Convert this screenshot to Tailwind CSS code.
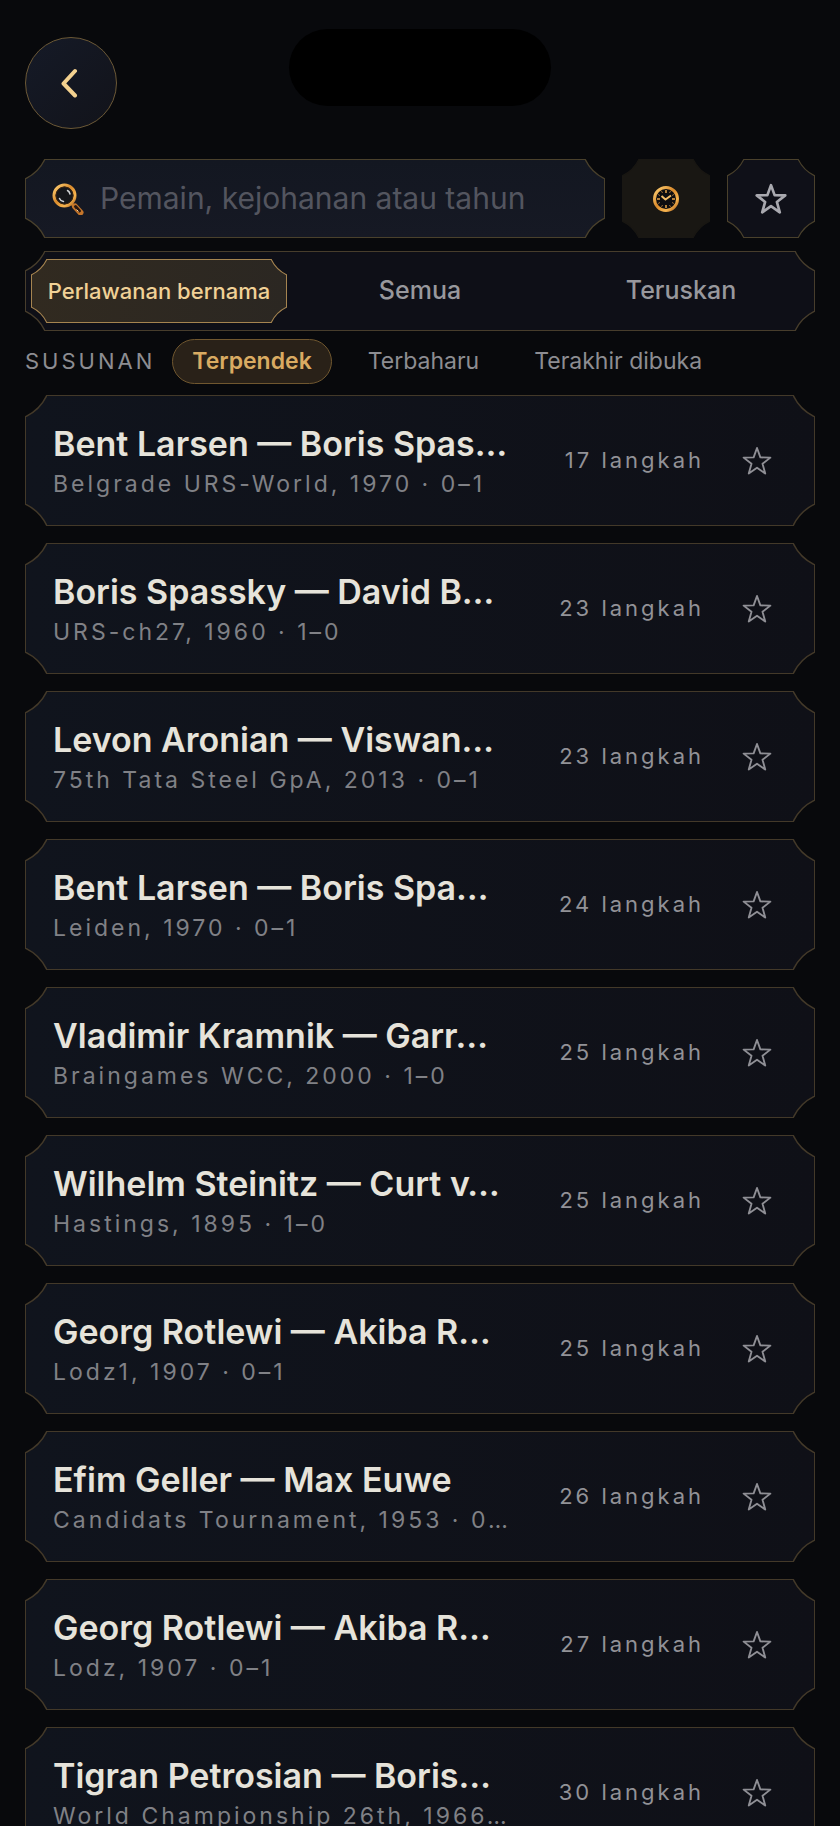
<!DOCTYPE html>
<html lang="ms">
<head>
<meta charset="utf-8">
<meta name="viewport" content="width=device-width, initial-scale=1">
<title>Perlawanan</title>
<script src="https://cdn.jsdelivr.net/npm/@tailwindcss/browser@4"></script>
</head>
<body class="relative flex h-screen flex-col overflow-hidden bg-[#08090c] font-['Inter','Liberation_Sans',sans-serif] text-[#9a9a9f]">

<svg class="absolute size-0" aria-hidden="true">
  <symbol id="star" viewBox="0 0 24 24">
    <path d="M12 1.6 14.7 9.1 22.7 9.3 16.4 14.2 18.6 22 12 17.4 5.4 22 7.6 14.2 1.3 9.3 9.3 9.1Z" fill="none" stroke="currentColor" stroke-linejoin="round"/>
  </symbol>
  <linearGradient id="gold" x1="0" y1="0" x2="1" y2="1">
    <stop offset="0" stop-color="#ffd277"/><stop offset=".45" stop-color="#d98a2b"/><stop offset=".75" stop-color="#f7b550"/><stop offset="1" stop-color="#a85c17"/>
  </linearGradient>
</svg>

<header class="flex items-start justify-between px-[25px] pt-[37px]">
  <button type="button" aria-label="Kembali" class="flex size-[92px] items-center justify-center rounded-full border border-[#6b5836] bg-linear-to-br from-[#151a27] to-[#12131a] text-[#f3d18f]">
    <svg class="h-8 w-5" viewBox="0 0 20 32" fill="none" stroke="currentColor" stroke-width="4" stroke-linecap="round" stroke-linejoin="round"><path d="M14 4 2.500 16.500 14 28.500"/></svg>
  </button>
</header>
<div class="absolute left-1/2 top-[29px] h-[77px] w-[262px] -translate-x-1/2 rounded-full bg-black"></div>

<main class="flex min-h-0 flex-1 flex-col px-[25px] pt-[30px]">
  <div class="flex gap-[17px]">
    <label data-frame="20" class="relative flex h-[79px] flex-1 items-center gap-4 border border-[#4a412c] bg-linear-to-b from-[#131721] to-[#161924] pl-[26px] text-[#4a412c]">
      <svg class="size-8 shrink-0" viewBox="0 0 32 32" aria-hidden="true">
        <path d="M19.500 20.500 23 24" stroke="#c8812f" stroke-width="3"/>
        <path d="M23 23.500 28.500 29.500" stroke="#c4752a" stroke-width="6" stroke-linecap="round"/>
        <path d="M23.500 23.500 27.500 28" stroke="#2a1710" stroke-width="3" stroke-linecap="round"/>
        <path d="M24.500 26.500 26.500 28.500" stroke="#ffd9a0" stroke-width="1"/>
        <circle cx="12.500" cy="12.500" r="10.500" fill="#14161a" stroke="url(#gold)" stroke-width="3"/>
        <circle cx="12.500" cy="12.500" r="8.500" fill="none" stroke="#3a2412" stroke-width="1"/>
        <path d="M15.500 7.500q2 1 2.500 3.500M7.500 15.500q1 2.500 4 3" fill="none" stroke="#cfd2d4" stroke-width="1.500" stroke-linecap="round"/>
      </svg>
      <input type="search" aria-label="Cari" placeholder="Pemain, kejohanan atau tahun" class="w-full min-w-0 bg-transparent text-[30px] text-[#e4e1d8] outline-none placeholder:text-[#53555f]">
    </label>
    <button type="button" aria-label="Terkini" data-frame="17" class="relative flex h-[79px] w-[88px] items-center justify-center border border-[#191713] bg-[#191713] text-[#191713]">
      <svg class="size-7" viewBox="0 0 28 28" aria-hidden="true">
        <circle cx="14" cy="14" r="11.500" fill="#0d0d10" stroke="url(#gold)" stroke-width="3"/>
        <path d="M14 5v3M14 20v3M5 14h3M20 14h3" stroke="#e8a54a" stroke-width="1.500"/>
        <path d="M9.500 6.200l1 1.700M18.500 6.200l-1 1.700M6.200 9.500l1.700 1M21.800 9.500l-1.700 1M6.200 18.500l1.700-1M21.800 18.500l-1.700-1M9.500 21.800l1-1.700M18.500 21.800l-1-1.700" stroke="#a8763a" stroke-width="1"/>
        <path d="M9.500 11 13.500 14.500 19 10.500" fill="none" stroke="#f3bd68" stroke-width="2" stroke-linejoin="round"/>
      </svg>
    </button>
    <button type="button" aria-label="Kegemaran" data-frame="17" class="relative flex h-[79px] w-[88px] items-center justify-center border border-[#4a412c] bg-[#0f1018] text-[#4a412c]">
      <svg class="size-8 text-[#a9a9af]" stroke-width="2" aria-hidden="true"><use href="#star"/></svg>
    </button>
  </div>

  <div role="tablist" data-frame="20" class="relative mt-[13px] grid h-20 shrink-0 grid-cols-3 gap-[5px] border border-[#473d2c] bg-[#0e0f17] px-[5px] py-[7px] text-[25px] font-medium text-[#473d2c]">
    <button type="button" role="tab" aria-selected="true" data-frame="16" class="relative border border-[#a58450] bg-linear-to-r from-[#312a20] to-[#2b2722] fill-[#0e0f17] text-[#a58450]"><span class="whitespace-nowrap text-[22px] text-[#f0d196]">Perlawanan bernama</span></button>
    <button type="button" role="tab" aria-selected="false" class="text-[#98989d]">Semua</button>
    <button type="button" role="tab" aria-selected="false" class="text-[#98989d]">Teruskan</button>
  </div>

  <div class="mt-2 flex shrink-0 items-center gap-[17px] text-[23px] text-[#8d8d92]">
    <span class="text-[22px] tracking-[3px]">SUSUNAN</span>
    <button type="button" class="h-[45px] rounded-full border border-[#70572f] bg-[#292118] px-[19px] font-semibold text-[#d9ab62]">Terpendek</button>
    <button type="button" class="h-[45px] px-[19px]">Terbaharu</button>
    <button type="button" class="h-[45px] px-[19px]">Terakhir dibuka</button>
  </div>

  <ul id="games" class="mt-[11px] flex min-h-0 flex-1 flex-col gap-[17px] overflow-hidden"></ul>
</main>

<template id="row">
  <li data-frame="22" class="relative flex h-[131px] shrink-0 items-center border border-[#433929] bg-linear-to-r from-[#10141d] to-[#0f1017] pl-[27px] pr-[42px] text-[#433929]">
    <a href="#" class="min-w-0 flex-1 pt-1 whitespace-nowrap">
      <span data-title class="block text-[34px] leading-[42px] font-semibold text-[#e6e3da]"></span>
      <span data-event class="block text-[23px] leading-[38px] tracking-[3px] text-[#808186]"></span>
    </a>
    <span data-moves class="mr-[38px] text-[22px] tracking-[3px] text-[#929297]"></span>
    <button type="button" aria-label="Tambah ke kegemaran" class="text-[#8f8f95]"><svg class="size-[30px]" stroke-width="1.500" aria-hidden="true"><use href="#star"/></svg></button>
  </li>
</template>

<!-- Scooped corner: hides the square corner and draws the arc -->
<template id="corner">
  <svg viewBox="0 0 22 22" aria-hidden="true" class="pointer-events-none absolute">
    <path d="M-1 -1H22V0Q15 15 0 22H-1Z"/>
    <path d="M22 0Q15 15 0 22" fill="none" stroke="currentColor" stroke-width="1.500"/>
  </svg>
</template>

<script>
const games = [
  ["Bent Larsen — Boris Spas…", "Belgrade URS-World, 1970 · 0–1", 17],
  ["Boris Spassky — David B…", "URS-ch27, 1960 · 1–0", 23],
  ["Levon Aronian — Viswan…", "75th Tata Steel GpA, 2013 · 0–1", 23],
  ["Bent Larsen — Boris Spa…", "Leiden, 1970 · 0–1", 24],
  ["Vladimir Kramnik — Garr…", "Braingames WCC, 2000 · 1–0", 25],
  ["Wilhelm Steinitz — Curt v…", "Hastings, 1895 · 1–0", 25],
  ["Georg Rotlewi — Akiba R…", "Lodz1, 1907 · 0–1", 25],
  ["Efim Geller — Max Euwe", "Candidats Tournament, 1953 · 0…", 26],
  ["Georg Rotlewi — Akiba R…", "Lodz, 1907 · 0–1", 27],
  ["Tigran Petrosian — Boris…", "World Championship 26th, 1966…", 30]
];
const row = document.getElementById("row");
const list = document.getElementById("games");
for (const [title, event, moves] of games) {
  const r = row.content.cloneNode(true);
  r.querySelector("[data-title]").textContent = title;
  r.querySelector("[data-event]").textContent = event;
  r.querySelector("[data-moves]").textContent = moves + " langkah";
  list.append(r);
}
const sizes = { 16: "size-4 fill-[#0e0f17]", 17: "size-[17px] fill-[#08090c]", 20: "size-5 fill-[#08090c]", 22: "size-[22px] fill-[#08090c]" };
const spots = ["-left-px -top-px", "-right-px -top-px -scale-x-100", "-left-px -bottom-px -scale-y-100", "-right-px -bottom-px -scale-x-100 -scale-y-100"];
const corner = document.getElementById("corner");
for (const box of document.querySelectorAll("[data-frame]")) {
  for (const spot of spots) {
    const c = corner.content.firstElementChild.cloneNode(true);
    c.setAttribute("class", c.getAttribute("class") + " " + sizes[box.dataset.frame] + " " + spot);
    box.append(c);
  }
}
</script>
</body>
</html>
